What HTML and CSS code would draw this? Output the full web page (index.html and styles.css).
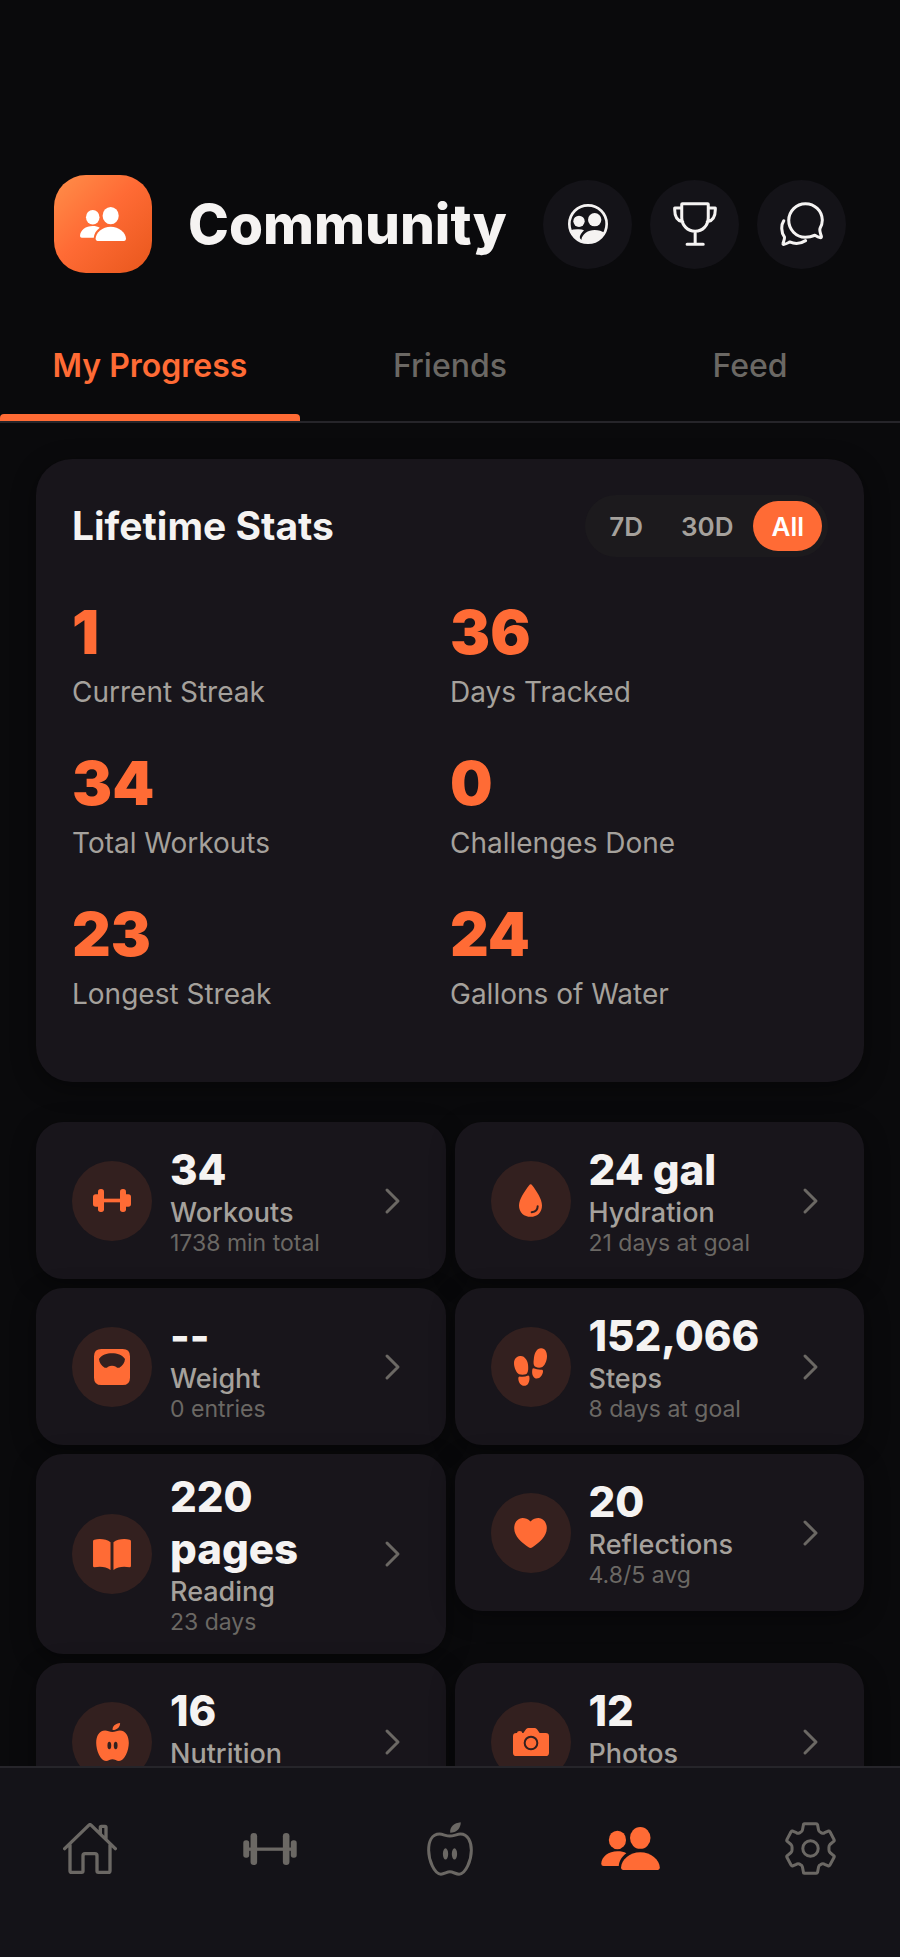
FILE: index.html
```html
<!DOCTYPE html>
<html lang="en">

<head>
    <meta charset="UTF-8">
    <meta name="viewport" content="width=device-width, initial-scale=1.0">
    <title>Community</title>
    <link rel="stylesheet" href="styles.css">
</head>

<body>
    <!-- shared icons -->
    <svg class="sprite" aria-hidden="true">
        <symbol id="people" viewBox="0 0 177 130">
            <ellipse cx="49" cy="39" rx="26" ry="28" />
            <ellipse cx="118" cy="33" rx="31" ry="33" />
            <path d="M7 118Q0 118 0 111C1 89 22 73 49 73C60 73 69 75 76 79C62 89 54 103 53 118Z" />
            <path d="M67 130Q60 130 60 122C61 98 86 76 118 76S176 98 177 122Q177 130 170 130Z" />
        </symbol>
        <symbol id="chevron" viewBox="0 0 36 36">
            <path d="M13 7L24 18L13 29" fill="none" stroke="currentColor" stroke-width="3" stroke-linecap="round" stroke-linejoin="round" />
        </symbol>
    </svg>

    <header class="header">
        <div class="logo">
            <svg width="46" height="34"><use href="#people" /></svg>
        </div>
        <h1>Community</h1>
        <div class="actions">
            <button type="button" aria-label="Groups">
                <svg width="40" height="40" viewBox="0 0 120 120">
                    <clipPath id="round"><circle cx="60" cy="60" r="58" /></clipPath>
                    <circle cx="60" cy="60" r="56" fill="none" stroke="currentColor" stroke-width="8" />
                    <circle cx="33" cy="52" r="17" />
                    <circle cx="80" cy="47" r="20" />
                    <g clip-path="url(#round)">
                        <path d="M4 80Q18 75 32 76Q42 76 48 79Q36 90 34 104V107H20L4 90Z" />
                        <path d="M20 98H34Q36 104 40 108C42 90 60 78 80 78Q98 78 110 88V120H30Z" />
                    </g>
                </svg>
            </button>
            <button type="button" aria-label="Challenges">
                <svg class="line" width="44" height="44" viewBox="0 0 131 131" stroke-width="9">
                    <path d="M26 7Q26 5 28 5H103Q105 5 105 7V46C105 70 88 87 66 87S26 70 26 46ZM66 88V126M42 126H90M26 18H5V22C5 42 12 56 29 59M105 18H126V22C126 42 119 56 102 59" />
                </svg>
            </button>
            <button type="button" aria-label="Messages">
                <svg class="line" width="44" height="44" viewBox="0 0 131 131" stroke-width="9">
                    <path d="M104 99C95 103 85 105 75 105A50 50 0 1 1 126 54C126 63 123 72 119 79C117 85 120 93 123 101Q125 107 119 106C114 105 109 102 104 99Z" />
                    <path d="M11 56C3 68 3 90 13 104C15 109 10 118 9 123Q8 127 12 126C18 125 23 122 29 119C45 126 62 124 76 115" />
                </svg>
            </button>
        </div>
    </header>

    <div class="tabs">
        <button type="button" class="current">My Progress</button>
        <button type="button">Friends</button>
        <button type="button">Feed</button>
    </div>

    <main>
        <section class="card lifetime">
            <div class="lifetime-head">
                <h2>Lifetime Stats</h2>
                <div class="range">
                    <button type="button">7D</button>
                    <button type="button">30D</button>
                    <button type="button" class="current">All</button>
                </div>
            </div>
            <ul class="stats">
                <li><strong>1</strong><span>Current Streak</span></li>
                <li><strong>36</strong><span>Days Tracked</span></li>
                <li><strong>34</strong><span>Total Workouts</span></li>
                <li><strong>0</strong><span>Challenges Done</span></li>
                <li><strong>23</strong><span>Longest Streak</span></li>
                <li><strong>24</strong><span>Gallons of Water</span></li>
            </ul>
        </section>

        <div class="tiles">
            <a href="#" class="card tile">
                <span class="icon">
                    <svg width="38" height="23" viewBox="0 0 114 69">
                        <rect x="15" width="18" height="69" rx="8" />
                        <rect x="81" width="18" height="69" rx="8" />
                        <rect y="16" width="24" height="37" rx="8" />
                        <rect x="90" y="16" width="24" height="37" rx="8" />
                        <rect x="30" y="29" width="54" height="11" />
                    </svg>
                </span>
                <span class="info"><strong>34</strong><span>Workouts</span><small>1738 min total</small></span>
                <svg class="chevron" width="36" height="36"><use href="#chevron" /></svg>
            </a>
            <a href="#" class="card tile">
                <span class="icon">
                    <svg width="23" height="33" viewBox="0 0 69 98">
                        <path d="M30 4Q35 -3 40 4C52 20 69 44 69 64C69 86 54 98 35 98S0 86 0 64C0 44 18 20 30 4Z" />
                        <path class="cut" d="M56 66C56 77 49 83 38 84" />
                    </svg>
                </span>
                <span class="info"><strong>24 gal</strong><span>Hydration</span><small>21 days at goal</small></span>
                <svg class="chevron" width="36" height="36"><use href="#chevron" /></svg>
            </a>
            <a href="#" class="card tile">
                <span class="icon">
                    <svg width="36" height="36" viewBox="0 0 108 108">
                        <path fill-rule="evenodd" d="M22 0H86Q108 0 108 22V86Q108 108 86 108H22Q0 108 0 86V22Q0 0 22 0ZM15 30C16 42 22 50 32 56Q38 58 42 53Q54 48 66 53Q70 58 76 56C86 50 92 42 93 30C84 18 70 13 54 13S24 18 15 30Z" />
                    </svg>
                </span>
                <span class="info"><strong>--</strong><span>Weight</span><small>0 entries</small></span>
                <svg class="chevron" width="36" height="36"><use href="#chevron" /></svg>
            </a>
            <a href="#" class="card tile">
                <span class="icon">
                    <svg width="33" height="38" viewBox="0 0 100 114">
                        <path d="M18 24C32 22 43 38 43 56C44 68 41 77 36 79Q26 82 15 79C8 76 0 60 0 46C0 34 7 25 18 24Z" />
                        <path d="M17 86Q31 88 43 83Q47 83 47 90C47 104 41 114 31 114C21 114 13 104 13 91Q13 86 17 86Z" />
                        <path d="M83 0C95 1 100 12 100 24C100 40 92 54 86 57Q75 62 65 56C60 54 58 46 60 34C61 14 70 -1 83 0Z" />
                        <path d="M59 61Q71 66 85 65Q88 65 88 70C87 82 79 92 69 92C60 91 54 82 55 68Q55 61 59 61Z" />
                    </svg>
                </span>
                <span class="info"><strong>152,066</strong><span>Steps</span><small>8 days at goal</small></span>
                <svg class="chevron" width="36" height="36"><use href="#chevron" /></svg>
            </a>
            <a href="#" class="card tile">
                <span class="icon">
                    <svg width="38" height="31" viewBox="0 0 115 94">
                        <path d="M0 7Q0 3 4 2C22 -2 42 1 53 10V94C40 84 22 82 4 86Q0 86 0 82Z" />
                        <path d="M115 7Q115 3 111 2C93 -2 73 1 62 10V94C75 84 93 82 111 86Q115 86 115 82Z" />
                    </svg>
                </span>
                <span class="info"><strong>220 pages</strong><span>Reading</span><small>23 days</small></span>
                <svg class="chevron" width="36" height="36"><use href="#chevron" /></svg>
            </a>
            <a href="#" class="card tile">
                <span class="icon">
                    <svg width="33" height="30" viewBox="0 0 100 92">
                        <path d="M50 11C58 2 66 0 74 0C90 1 100 14 100 31C100 58 76 76 56 90Q50 94 44 90C24 76 0 58 0 31C0 14 10 1 26 0C34 0 42 2 50 11Z" />
                    </svg>
                </span>
                <span class="info"><strong>20</strong><span>Reflections</span><small>4.8/5 avg</small></span>
                <svg class="chevron" width="36" height="36"><use href="#chevron" /></svg>
            </a>
            <a href="#" class="card tile">
                <span class="icon">
                    <svg width="33" height="38" viewBox="0 0 139 162">
                        <path d="M69 38C58 38 48 32 38 32C12 32 0 57 0 85C0 116 18 162 42 162C52 162 60 155 69 155C79 155 87 162 97 162C121 162 139 116 139 85C139 57 126 32 101 32C91 32 80 38 69 38ZM70 30C68 14 82 2 102 0C102 17 90 30 70 30Z" />
                        <ellipse class="hole" cx="56" cy="96" rx="8" ry="16" />
                        <ellipse class="hole" cx="83" cy="96" rx="8" ry="16" />
                    </svg>
                </span>
                <span class="info"><strong>16</strong><span>Nutrition</span><small>&nbsp;</small></span>
                <svg class="chevron" width="36" height="36"><use href="#chevron" /></svg>
            </a>
            <a href="#" class="card tile">
                <span class="icon">
                    <svg width="36" height="28" viewBox="0 0 108 84">
                        <path d="M10 15H12Q12 9 20 9T28 15H31L39 4Q42 0 47 0H64Q69 0 72 4L80 15H98Q108 15 108 25V74Q108 84 98 84H10Q0 84 0 74V25Q0 15 10 15Z" />
                        <circle class="cut" cx="54" cy="45" r="19" />
                    </svg>
                </span>
                <span class="info"><strong>12</strong><span>Photos</span><small>&nbsp;</small></span>
                <svg class="chevron" width="36" height="36"><use href="#chevron" /></svg>
            </a>
        </div>
    </main>

    <nav class="nav">
        <a href="#" aria-label="Home">
            <svg class="line" width="54" height="51" viewBox="0 0 162 153" stroke-width="10">
                <path d="M5 77L77 7Q81 3 85 7L157 77M21 66V143Q21 148 26 148H56Q60 148 60 144V98Q60 92 66 92H96Q102 92 102 98V144Q102 148 106 148H136Q141 148 141 143V66M112 32V13Q112 10 115 10H126Q129 10 129 13V48" />
            </svg>
        </a>
        <a href="#" aria-label="Workouts">
            <svg width="54" height="32" viewBox="0 0 162 97">
                <rect x="22" width="20" height="97" rx="10" />
                <rect x="120" width="20" height="97" rx="10" />
                <rect y="22" width="18" height="53" rx="8" />
                <rect x="144" y="22" width="18" height="53" rx="8" />
                <rect x="14" y="44" width="134" height="10" />
            </svg>
        </a>
        <a href="#" aria-label="Nutrition">
            <svg width="46" height="54" viewBox="0 0 139 162">
                <path fill="none" stroke="currentColor" stroke-width="9" d="M69 42C58 42 48 36 38 36C14 36 5 60 5 85C5 115 22 157 42 157C52 157 60 150 69 150C79 150 87 157 97 157C117 157 134 115 134 85C134 60 124 36 101 36C91 36 80 42 69 42Z" />
                <path d="M70 32C68 14 82 2 102 0C102 18 90 31 70 32Z" />
                <ellipse cx="56" cy="96" rx="8" ry="17" />
                <ellipse cx="83" cy="96" rx="8" ry="17" />
            </svg>
        </a>
        <a href="#" aria-label="Community" class="current">
            <svg width="59" height="43"><use href="#people" /></svg>
        </a>
        <a href="#" aria-label="Settings">
            <svg class="line" width="51" height="53" viewBox="0 0 152 158" stroke-width="9">
                <path d="M58 5H93Q96 5 97 8L100 24Q101 29 106 31L110 33Q114 35 118 32L129 27Q132 26 134 29L146 52Q148 56 145 58L134 67Q131 70 131 75V83Q131 88 134 91L145 100Q148 102 146 106L134 128Q132 132 129 131L118 126Q114 123 110 125L106 127Q101 129 100 134L97 150Q96 153 93 153H58Q55 153 55 150L52 134Q51 129 46 127L42 125Q38 123 34 126L23 131Q20 132 18 128L6 106Q4 102 7 100L18 91Q21 88 21 83V75Q21 70 18 67L7 58Q4 56 6 52L18 29Q20 26 23 27L34 32Q38 35 42 33L46 31Q51 29 52 24L55 8Q55 5 58 5Z" />
                <circle cx="76" cy="79" r="23" />
            </svg>
        </a>
    </nav>
</body>

</html>
```
FILE: styles.css
```css
* {
    margin: 0;
    padding: 0;
    box-sizing: border-box;
}

body {
    display: flex;
    flex-direction: column;
    height: 100vh;
    background: #0a0a0c;
    color: #f5f3f2;
    font-family: Inter, "Liberation Sans", sans-serif;
}

li {
    list-style: none;
}

a {
    color: inherit;
    text-decoration: none;
}

button {
    border: 0;
    background: none;
    color: inherit;
    font-family: inherit;
    cursor: pointer;
}

svg {
    display: block;
    fill: currentColor;
}

.sprite {
    position: absolute;
    width: 0;
    height: 0;
}

.line {
    fill: none;
    stroke: currentColor;
    stroke-linecap: round;
    stroke-linejoin: round;
}

/* header */
.header {
    display: flex;
    align-items: center;
    padding: 175px 54px 0;
}

.logo {
    display: flex;
    align-items: center;
    justify-content: center;
    width: 98px;
    height: 98px;
    margin-right: 36px;
    border-radius: 32px;
    background: linear-gradient(135deg, #ff8f4a 0%, #ff6b35 45%, #e8571c 100%);
    color: #fff;
}

.header h1 {
    flex: 1;
    font-size: 55px;
    font-weight: 800;
    line-height: 68px;
}

.actions {
    display: flex;
    gap: 18px;
}

.actions button {
    display: flex;
    align-items: center;
    justify-content: center;
    width: 89px;
    height: 89px;
    border-radius: 50%;
    background: #141318;
}

/* tabs */
.tabs {
    display: flex;
    flex-shrink: 0;
    margin-top: 44px;
    border-bottom: 2px solid #26252a;
}

.tabs button {
    position: relative;
    flex: 1;
    height: 104px;
    padding-bottom: 8px;
    color: #6b6864;
    font-size: 32px;
    font-weight: 500;
}

.tabs .current {
    color: #ff6b35;
    font-weight: 600;
}

.tabs .current::after {
    content: "";
    position: absolute;
    right: 0;
    bottom: 0;
    left: 0;
    height: 7px;
    border-radius: 4px 4px 0 0;
    background: #ff6b35;
}

/* content */
main {
    flex: 1;
    min-height: 0;
    padding: 36px 36px 0;
    overflow: hidden;
}

.card {
    background: #18151b;
    box-shadow: 0 6px 24px rgba(0, 0, 0, .4);
}

.lifetime {
    padding: 36px 36px 70px;
    border-radius: 36px;
}

.lifetime-head {
    display: flex;
    align-items: center;
    justify-content: space-between;
    margin-bottom: 38px;
}

.lifetime h2 {
    font-size: 39px;
    font-weight: 700;
    line-height: 46px;
}

.range {
    display: flex;
    gap: 2px;
    padding: 6px;
    border-radius: 32px;
    background: #1c1a1d;
}

.range button {
    height: 50px;
    padding: 0 18px;
    border-radius: 25px;
    color: #a5a19c;
    font-size: 26px;
    font-weight: 600;
}

.range .current {
    background: #ff6b35;
    color: #fff;
}

.stats {
    display: grid;
    grid-template-columns: 1fr 1fr;
    row-gap: 36px;
}

.stats strong,
.stats span {
    display: block;
}

.stats strong {
    color: #ff6b35;
    font-size: 60px;
    font-weight: 900;
    line-height: 75px;
}

.stats span {
    margin-top: 4px;
    color: #a5a19c;
    font-size: 28px;
    line-height: 36px;
}

/* tiles */
.tiles {
    display: grid;
    grid-template-columns: 1fr 1fr;
    align-items: start;
    gap: 9px;
    margin-top: 40px;
}

.tile {
    display: flex;
    align-items: center;
    gap: 18px;
    min-height: 157px;
    padding: 17px 36px;
    border-radius: 27px;
}

.icon {
    display: flex;
    flex-shrink: 0;
    align-items: center;
    justify-content: center;
    width: 80px;
    height: 80px;
    border-radius: 50%;
    background: #33201f;
    color: #ff6b35;
}

.cut {
    fill: none;
    stroke: #33201f;
    stroke-width: 6;
    stroke-linecap: round;
}

.hole {
    fill: #33201f;
}

.info {
    flex: 1;
    min-width: 0;
}

.info strong,
.info span,
.info small {
    display: block;
}

.info strong {
    font-size: 42px;
    font-weight: 800;
    line-height: 52px;
}

.info span {
    color: #a5a19c;
    font-size: 27px;
    font-weight: 500;
    line-height: 33px;
}

.info small {
    color: #6b6864;
    font-size: 23px;
    line-height: 29px;
}

.chevron {
    flex-shrink: 0;
    margin-left: -18px;
    color: #6b6864;
}

/* bottom navigation */
.nav {
    display: flex;
    flex-shrink: 0;
    height: 191px;
    padding-bottom: 28px;
    border-top: 2px solid #26252a;
    background: #141318;
    color: #6b6864;
}

.nav a {
    display: flex;
    flex: 1;
    align-items: center;
    justify-content: center;
}

.nav .current {
    color: #ff6b35;
}
```
